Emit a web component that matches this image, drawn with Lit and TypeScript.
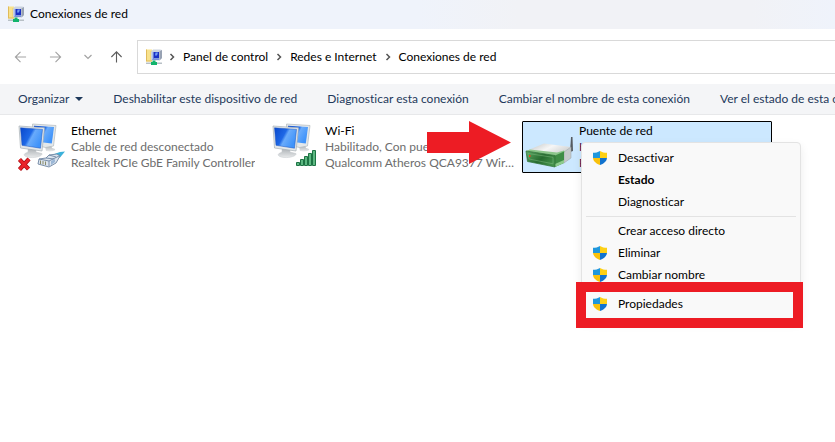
import { LitElement, html, svg, css, nothing } from "lit";
import { customElement, state } from "lit/decorators.js";
import { classMap } from "lit/directives/class-map.js";

interface Connection {
  name: string;
  status: string;
  device: string;
  icon: () => unknown;
}

interface MenuEntry {
  label: string;
  shield?: boolean;
  bold?: boolean;
}

const folderIcon = () => html`
  <svg class="icon16" viewBox="0 0 16 16" aria-hidden="true">
    <path d="M0 .5h6v12H0z" fill="#f8e28d" />
    <path d="M0 .5h1v12H0zM0 11.500h6v1H0z" fill="#e0bb5a" />
    <path d="M4.500 2h1.500v10H4.500z" fill="#e9cb6c" />
    <path d="M7 .5h7l2 .5v8l-2.500 2.500H6L5 10.500V2.500z" fill="#ccd3df" />
    <path d="M13.500 2.500L16 1v8l-2.500 2.500z" fill="#98a2b3" />
    <path d="M6 3h7v7.500H6z" fill="#1a2fc4" />
    <path d="M6 3h1.500v7.500H6z" fill="#a9bdea" />
    <path d="M7.500 9h5.500v1.500H7.500z" fill="#7f9be0" />
    <path d="M9.500 3.500h2.500l-1 3H9z" fill="#6f9bf2" />
    <path d="M0 13.500h16v1.500H0z" fill="#b8c0c6" />
    <path d="M6.500 11.500h3v1.500h1.500v3h-6v-3h1.500z" fill="#12b46c" />
  </svg>
`;

const shieldIcon = () => html`
  <svg class="shield" viewBox="0 0 14 14" aria-hidden="true">
    <path d="M7 0C5 1.300 2.500 1.800 0 1.800V7h7z" fill="#1f97dc" />
    <path d="M7 0c2 1.300 4.500 1.800 7 1.800V7H7z" fill="#fdd016" />
    <path d="M0 7h7v7C3.500 12.800.4 10.500 0 7z" fill="#f9c10c" />
    <path d="M14 7H7v7c3.500-1.200 6.600-3.500 7-7z" fill="#1173cf" />
  </svg>
`;

const monitors = () => svg`
  <defs>
    <linearGradient id="screen" x1="0" y1="0" x2="1" y2="0.500">
      <stop offset="0" stop-color="#0a48cc" />
      <stop offset="0.480" stop-color="#1e68e6" />
      <stop offset="0.600" stop-color="#69abfb" />
      <stop offset="1" stop-color="#3f93fa" />
    </linearGradient>
    <linearGradient id="stand" x1="0" y1="0" x2="0" y2="1">
      <stop offset="0" stop-color="#a9aeb2" />
      <stop offset="1" stop-color="#e8eaeb" />
    </linearGradient>
  </defs>
  <path d="M28 23l6-1 1 3 3 1c1 2-4 3-9 2z" fill="url(#stand)" />
  <path d="M15.500 1l23.500 1.500-2.500 20.500-8 1.500-13-3z" fill="#e4e8ea" stroke="#b3babf" stroke-width=".7" />
  <path d="M17 2.700l20 1.300-2.200 16.500-16.800-2z" fill="url(#screen)" />
  <path d="M11 25l8 1 0 3 6 1.500c1 2-5 4.500-12 4-5-.5-7-2.500-5-4l3-1.500z" fill="url(#stand)" stroke="#c5c9cc" stroke-width=".5" />
  <path d="M2 3l25.500 1.800-2.500 23.200L3.500 25z" fill="#e4e8ea" stroke="#a8b0b6" stroke-width=".7" />
  <path d="M3.500 4.800l22 1.600-2 18.800L5 22.300z" fill="url(#screen)" stroke="#1950bd" stroke-width=".5" />
`;

const ethernetIcon = () => html`
  <svg class="device" viewBox="0 0 48 48" aria-hidden="true">
    ${monitors()}
    <path d="M36 31.500l7-2.500 5-.5-5 6-3 .5z" fill="#3cb1da" />
    <path d="M22 36l7-1 3-3 8-1 3 2-4 7-7 4-11-3z" fill="#dbe4ee" stroke="#6f86a3" stroke-width=".9" />
    <path d="M22 36l10 2 10-5M32 38v5M29 35l8 1M32 32l7 2" fill="none" stroke="#6f86a3" stroke-width=".9" />
    <path d="M34 38l4-2v3l-4 3z" fill="#9bb7d6" />
    <path d="M23.500 37.500v3.500M26 38v3.500M28.500 38.500v3.500" stroke="#8a8b6a" stroke-width="1" />
    <path d="M2.500 36.500l9 9.500M12 36L2.500 46.500" fill="none" stroke="#a40d12" stroke-width="4.200" />
    <path d="M2.500 36.500l9 9.500M12 36L2.500 46.500" fill="none" stroke="#ea2429" stroke-width="2.800" />
  </svg>
`;

const wifiIcon = () => html`
  <svg class="device" viewBox="0 0 48 48" aria-hidden="true">
    ${monitors()}
    <g fill="#5cb881" stroke="#1d7344" stroke-width="1">
      <path d="M25.500 39.500h3v3h-3z" />
      <path d="M29.500 36.500h3v6h-3z" />
      <path d="M33.500 33.500h3v9h-3z" />
      <path d="M37.500 30.500h3v12h-3z" />
      <path d="M41.500 27.500h3v15h-3z" />
    </g>
  </svg>
`;

const bridgeIcon = () => html`
  <svg class="device" viewBox="0 0 48 48" aria-hidden="true">
    <defs>
      <linearGradient id="lid" x1="0" y1="0" x2="1" y2="0.500">
        <stop offset="0" stop-color="#b9bdbc" />
        <stop offset="0.550" stop-color="#f6f6f6" />
        <stop offset="1" stop-color="#cfd1d1" />
      </linearGradient>
      <linearGradient id="front" x1="0" y1="0" x2="1" y2="0.600">
        <stop offset="0" stop-color="#5da862" />
        <stop offset="0.600" stop-color="#266b2f" />
        <stop offset="1" stop-color="#43904a" />
      </linearGradient>
    </defs>
    <path d="M46 14l1.500 0 .5 14-3 1z" fill="#555b61" />
    <path d="M1 28l18-7.500 27 3.500-7 5-8 3.500z" fill="url(#lid)" />
    <path d="M39 29l7-5v11l-7 5z" fill="#c6cacb" stroke="#9ba1a3" stroke-width=".5" />
    <path d="M1 28l4-1.500 27 3 7-2 1 1.500-10 4z" fill="#8cc68b" />
    <path d="M30 32.500l9-4V40l-9 4z" fill="#3f8d46" />
    <path d="M30 41l9-4v3l-9 4z" fill="#8fcb8d" />
    <path d="M1 28l29 4.500V44L2.500 38.500z" fill="url(#front)" stroke="#2e7136" stroke-width=".7" />
    <path d="M3 30.500l25 3.800v6.500L4 36z" fill="none" stroke="#7fb981" stroke-width=".5" />
    <path d="M4 32h1.500v2H4z" fill="#f2401c" />
  </svg>
`;

const chevron = () => html`
  <svg class="chevron" viewBox="0 0 8 8" aria-hidden="true"><path d="M2.500 1l3 3-3 3" /></svg>
`;

@customElement("app-root")
export class AppRoot extends LitElement {
  @state() private selected = 2;

  private crumbs = ["Panel de control", "Redes e Internet", "Conexiones de red"];

  private commands = [
    "Deshabilitar este dispositivo de red",
    "Diagnosticar esta conexión",
    "Cambiar el nombre de esta conexión",
    "Ver el estado de esta conexión",
  ];

  private connections: Connection[] = [
    { name: "Ethernet", status: "Cable de red desconectado", device: "Realtek PCIe GbE Family Controller", icon: ethernetIcon },
    { name: "Wi-Fi", status: "Habilitado, Con puente", device: "Qualcomm Atheros QCA9377 Wireless Network Adapter", icon: wifiIcon },
    { name: "Puente de red", status: "Habilitado", device: "Puente MAC", icon: bridgeIcon },
  ];

  private menu: MenuEntry[][] = [
    [{ label: "Desactivar", shield: true }, { label: "Estado", bold: true }, { label: "Diagnosticar" }],
    [{ label: "Crear acceso directo" }, { label: "Eliminar", shield: true }, { label: "Cambiar nombre", shield: true }],
    [{ label: "Propiedades", shield: true }],
  ];

  static styles = css`
    :host {
      display: block;
      min-height: 100vh;
      overflow: hidden;
      background: #fff;
      color: #000;
      font: 12px/16px Lato, "Open Sans", sans-serif;
      font-variant-ligatures: none;
    }
    button {
      font: inherit;
      font-variant-ligatures: inherit;
      color: inherit;
      background: none;
      border: 0;
      padding: 0;
      margin: 0;
      text-align: left;
      white-space: nowrap;
    }
    svg {
      display: block;
      flex: none;
    }
    .icon16 {
      width: 16px;
      height: 16px;
    }
    .title {
      display: flex;
      align-items: center;
      gap: 6px;
      height: 29px;
      box-sizing: border-box;
      padding: 0 8px 2px;
      background: linear-gradient(90deg, #eff3fb 50%, #f1f2f6 62%, #f1f2f6 90%, #eff3fb);
    }
    h1 {
      margin: 0;
      font: inherit;
    }
    .nav {
      display: flex;
      align-items: center;
      height: 55px;
      padding-left: 14px;
    }
    .arrows {
      display: flex;
      align-items: center;
      gap: 22px;
      width: 123px;
      color: #a3a3a3;
    }
    .arrows svg {
      width: 13px;
      height: 14px;
      fill: none;
      stroke: currentColor;
      stroke-width: 1.200;
    }
    .arrows .small svg {
      width: 8px;
    }
    .arrows .up {
      margin-left: -4px;
      color: #5c5c5c;
    }
    .address {
      display: flex;
      flex: 1;
      align-items: center;
      gap: 7px;
      height: 32px;
      padding-left: 8px;
      border: 1px solid #d9d9d9;
      border-right: 0;
    }
    .address a {
      color: #000;
      text-decoration: none;
      white-space: nowrap;
    }
    .address .icon16 {
      margin-right: -1px;
    }
    .chevron {
      width: 8px;
      height: 8px;
      fill: none;
      stroke: #555;
      stroke-width: 1.500;
    }
    .commands {
      display: flex;
      align-items: center;
      gap: 30px;
      height: 30px;
      padding-left: 18px;
      overflow: hidden;
      background: #f4f5f7;
      border-bottom: 1px solid #e7e8ea;
      color: #1e395b;
    }
    .organize {
      display: flex;
      align-items: center;
      gap: 6px;
    }
    .organize svg {
      width: 8px;
      height: 4px;
      fill: #1e395b;
    }
    .grid {
      display: grid;
      grid-template-columns: repeat(auto-fill, 250px);
      column-gap: 4px;
      margin: 0;
      padding: 6px 0 0 14px;
      list-style: none;
    }
    .cell {
      position: relative;
    }
    .tile {
      display: flex;
      gap: 6px;
      width: 100%;
      height: 52px;
      box-sizing: border-box;
      padding: 1px 0 0 2px;
      border: 1px solid transparent;
      border-radius: 1px;
    }
    .tile.selected {
      background: #cce8ff;
      border-color: #000;
    }
    .device {
      width: 48px;
      height: 48px;
    }
    .lines {
      display: block;
      min-width: 0;
    }
    .lines span {
      display: block;
      overflow: hidden;
      text-overflow: ellipsis;
      color: #6d6d6d;
    }
    .lines .name {
      color: #000;
    }
    .selected .lines span {
      color: #4a0a4a;
    }
    .selected .lines .name {
      color: #000;
    }
    .arrow {
      position: absolute;
      left: 159px;
      top: 0;
      width: 84px;
      height: 43px;
      fill: #ed1c24;
    }
    .menu {
      position: absolute;
      left: 59px;
      top: 21px;
      width: 220px;
      box-sizing: border-box;
      padding: 4px;
      border: 1px solid #e3e3e3;
      border-radius: 4px;
      background: #f9f9f9;
      box-shadow: 0 4px 10px rgba(0, 0, 0, 0.08);
    }
    .group + .group {
      margin-top: 3px;
      padding-top: 3px;
      border-top: 1px solid #e3e3e3;
    }
    .item {
      display: grid;
      grid-template-columns: 14px 1fr;
      column-gap: 11px;
      align-items: center;
      width: 100%;
      height: 22px;
      padding-left: 7px;
    }
    .item span {
      grid-column: 2;
    }
    .shield {
      width: 14px;
      height: 14px;
    }
    .bold {
      font-weight: 700;
    }
    .frame {
      position: absolute;
      inset: auto -3px -9px -6px;
      height: 26px;
      border: 10px solid #ed1c24;
      pointer-events: none;
    }
  `;

  private renderMenu() {
    return html`
      <div class="menu" role="menu">
        ${this.menu.map(
          (group) => html`
            <div class="group" role="group">
              ${group.map(
                (entry) => html`
                  <button class=${classMap({ item: true, bold: !!entry.bold })} role="menuitem">
                    ${entry.shield ? shieldIcon() : nothing}<span>${entry.label}</span>
                  </button>
                `
              )}
            </div>
          `
        )}
        <div class="frame"></div>
      </div>
    `;
  }

  render() {
    return html`
      <header class="title">${folderIcon()}<h1>Conexiones de red</h1></header>
      <div class="nav">
        <div class="arrows">
          <button aria-label="Atrás">
            <svg viewBox="0 0 14 14"><path d="M13 7H1.500M7 1.500L1.500 7 7 12.500" /></svg>
          </button>
          <button aria-label="Adelante">
            <svg viewBox="0 0 14 14"><path d="M1 7h11.500M7 1.500L12.500 7 7 12.500" /></svg>
          </button>
          <button class="small" aria-label="Ubicaciones recientes">
            <svg viewBox="0 0 8 14"><path d="M.5 5L4 8.500 7.500 5" /></svg>
          </button>
          <button class="up" aria-label="Subir">
            <svg viewBox="0 0 14 14"><path d="M7 13V1.500M1.500 7L7 1.500 12.500 7" /></svg>
          </button>
        </div>
        <nav class="address" aria-label="Ruta">
          ${folderIcon()} ${this.crumbs.map((crumb) => html`${chevron()}<a href="#">${crumb}</a>`)}
        </nav>
      </div>
      <div class="commands" role="toolbar">
        <button class="organize">Organizar<svg viewBox="0 0 8 4" aria-hidden="true"><path d="M0 0h8L4 4z" /></svg></button>
        ${this.commands.map((command) => html`<button>${command}</button>`)}
      </div>
      <ul class="grid">
        ${this.connections.map(
          (item, index) => html`
            <li class="cell">
              <button
                class=${classMap({ tile: true, selected: index === this.selected })}
                @click=${() => (this.selected = index)}
              >
                ${item.icon()}
                <span class="lines">
                  <span class="name">${item.name}</span>
                  <span>${item.status}</span>
                  <span>${item.device}</span>
                </span>
              </button>
              ${index === 1
                ? html`<svg class="arrow" viewBox="0 0 84 43" aria-hidden="true">
                    <path d="M0 11h42V0l42 21.500L42 43V32H0z" />
                  </svg>`
                : nothing}
              ${index === 2 ? this.renderMenu() : nothing}
            </li>
          `
        )}
      </ul>
    `;
  }
}
